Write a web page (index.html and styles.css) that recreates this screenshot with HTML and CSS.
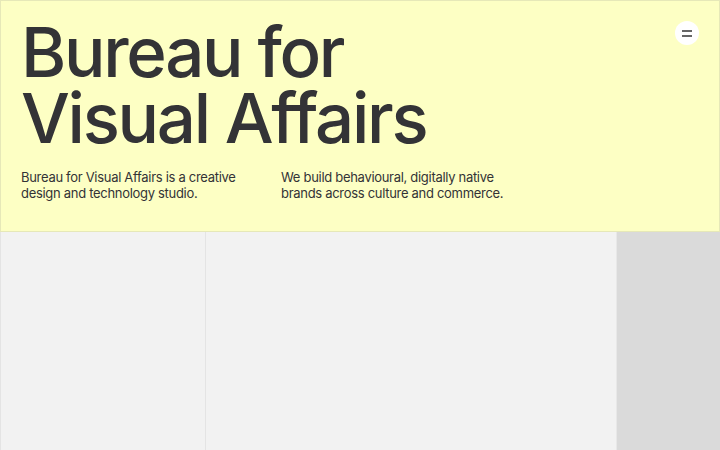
FILE: index.html
```html
<!DOCTYPE html>
<html lang="en">
<head>
    <meta charset="UTF-8">
    <meta name="viewport" content="width=device-width, initial-scale=1.0">
    <title>Bureau for Visual Affairs</title>
    <link rel="stylesheet" href="styles.css">
</head>
<body>
    <header class="intro">
        <h1 class="title">Bureau for<br>Visual Affairs</h1>
        <div class="blurbs">
            <p>Bureau for Visual Affairs is a creative design and technology studio.</p>
            <p>We build behavioural, digitally native brands across culture and commerce.</p>
        </div>
        <button class="menu-btn" aria-label="Menu">
            <span></span><span></span>
        </button>
    </header>

    <main class="grid">
        <div class="col col-a"></div>
        <div class="col col-b"></div>
        <div class="col col-c"></div>
    </main>
</body>
</html>
```

FILE: styles.css
```css
* { margin: 0; padding: 0; box-sizing: border-box; }
html, body { height: 100%; }
body {
    font-family: Inter, "Liberation Sans", sans-serif;
    color: #333336;
    background: #f2f2f2;
    display: flex;
    flex-direction: column;
    overflow: hidden;
}
.intro {
    position: relative;
    background: #fdffc4;
    border: 1px solid #e6e8b8;
    height: 232px;
    padding: 18px 20px 0 20px;
}
.title {
    font-weight: 500;
    font-size: 69px;
    line-height: 66px;
    letter-spacing: -2.3px;
}
.blurbs {
    display: flex;
    margin-top: 18px;
}
.blurbs p {
    width: 260px;
    font-size: 13px;
    line-height: 16px;
    letter-spacing: -0.3px;
    padding-right: 20px;
}
.menu-btn {
    position: absolute;
    top: 20px;
    right: 20px;
    width: 24px;
    height: 24px;
    border-radius: 50%;
    border: none;
    background: #fff;
    display: flex;
    flex-direction: column;
    justify-content: center;
    align-items: center;
    gap: 3px;
    cursor: pointer;
}
.menu-btn span {
    width: 10px;
    height: 2px;
    background: #666;
}
.grid {
    flex: 1;
    display: flex;
}
.col { height: 100%; }
.col-a {
    width: 206px;
    border-left: 1px solid #e4e4e4;
    border-right: 1px solid #e4e4e4;
}
.col-b {
    width: 411px;
    border-right: 1px solid #e8e8e8;
}
.col-c {
    flex: 1;
    background: #dadada;
}
```
